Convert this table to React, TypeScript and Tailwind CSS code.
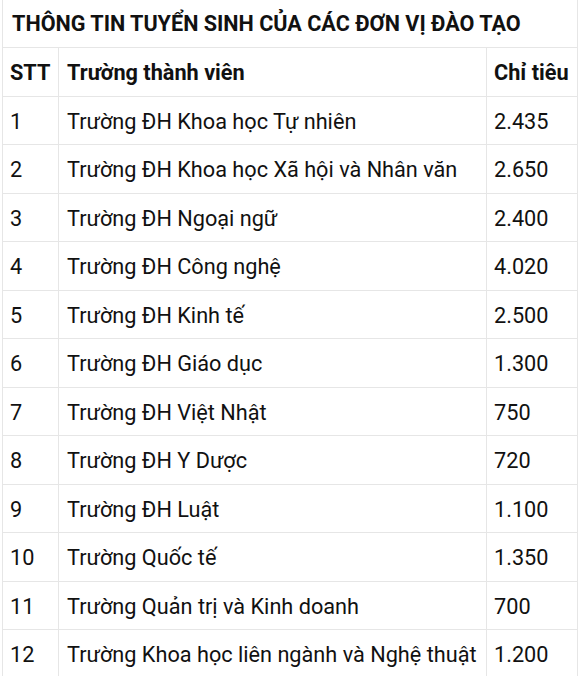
import React from "react";

const rows: [string, string, string][] = [
  ["1", "Trường ĐH Khoa học Tự nhiên", "2.435"],
  ["2", "Trường ĐH Khoa học Xã hội và Nhân văn", "2.650"],
  ["3", "Trường ĐH Ngoại ngữ", "2.400"],
  ["4", "Trường ĐH Công nghệ", "4.020"],
  ["5", "Trường ĐH Kinh tế", "2.500"],
  ["6", "Trường ĐH Giáo dục", "1.300"],
  ["7", "Trường ĐH Việt Nhật", "750"],
  ["8", "Trường ĐH Y Dược", "720"],
  ["9", "Trường ĐH Luật", "1.100"],
  ["10", "Trường Quốc tế", "1.350"],
  ["11", "Trường Quản trị và Kinh doanh", "700"],
  ["12", "Trường Khoa học liên ngành và Nghệ thuật", "1.200"],
];

export default function App() {
  return (
    <div className="w-[580px] h-[676px] overflow-hidden bg-white pl-[2px] text-[#111111]" style={{ fontFamily: "Roboto, 'Noto Sans', sans-serif" }}>
      <table className="border-collapse table-fixed w-[575px]">
        <colgroup>
          <col className="w-[56px]" />
          <col className="w-[428px]" />
          <col className="w-[91px]" />
        </colgroup>
        <tbody>
          <tr className="h-[47px]">
            <td colSpan={3} className="border border-t-0 border-[#e6e6e6] px-[9px] pt-[2px] text-[21.6px] font-bold uppercase leading-none whitespace-nowrap">
              THÔNG TIN TUYỂN SINH CỦA CÁC ĐƠN VỊ ĐÀO TẠO
            </td>
          </tr>
          <tr className="h-[49px]">
            <td className="border border-[#e6e6e6] px-[7px] pt-[4px] text-[21.7px] font-bold">STT</td>
            <td className="border border-[#e6e6e6] px-[8px] pt-[4px] text-[21.7px] font-bold">Trường thành viên</td>
            <td className="border border-[#e6e6e6] px-[7px] pt-[4px] text-[21.7px] font-bold whitespace-nowrap">Chỉ tiêu</td>
          </tr>
          {rows.map(([a, b, c]) => (
            <tr key={a} className="h-[48.5px]">
              <td className="border border-[#e6e6e6] px-[7px] pt-[4px] text-[21.7px]">{a}</td>
              <td className="border border-[#e6e6e6] px-[8px] pt-[4px] text-[21.7px] whitespace-nowrap">{b}</td>
              <td className="border border-[#e6e6e6] px-[7px] pt-[4px] text-[21.7px]">{c}</td>
            </tr>
          ))}
        </tbody>
      </table>
    </div>
  );
}
